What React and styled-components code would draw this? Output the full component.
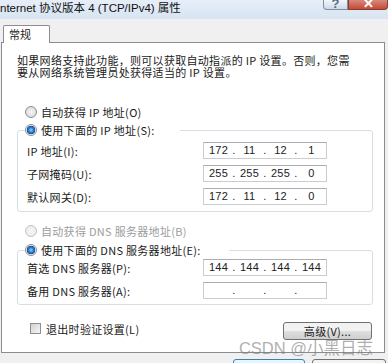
import React from 'react'
import styled, { createGlobalStyle } from 'styled-components'

const GlobalStyle = createGlobalStyle`
    html, body {
        margin: 0;
        padding: 0;
        background: #f0f0f0;
        overflow: hidden;
    }
`;

const cjk = `"Noto Sans CJK SC", "Noto Sans", sans-serif`;

const Window = styled.div`
    width: 388px;
    height: 363px;
    display: flex;
    flex-direction: column;
    background: #f0f0f0;
    overflow: hidden;
    font-family: ${cjk};
    color: #1a1a1a;
`;

const TitleBar = styled.div`
    height: 19px;
    flex-shrink: 0;
    display: flex;
    align-items: flex-start;
    background: linear-gradient(#e6eef8, #d8e4f2);
`;

const Title = styled.div`
    font-family: "Liberation Sans", "Noto Sans CJK SC", sans-serif;
    font-size: 11.5px;
    line-height: 17px;
    white-space: nowrap;
    color: #111;
`;

const CaptionButtons = styled.div`
    margin-left: auto;
    display: flex;
`;

const CaptionButton = styled.div`
    width: ${p => p.$w}px;
    height: 10px;
    box-sizing: border-box;
    display: flex;
    justify-content: center;
    align-items: flex-end;
    overflow: hidden;
    font-family: "Liberation Sans", sans-serif;
    font-weight: bold;
    font-size: 13px;
    line-height: 10px;
    border: 1px solid ${p => p.$close ? '#8c3a2e' : '#7f8ea3'};
    border-top: none;
    border-radius: ${p => p.$close ? '0 0 4px 0' : '0 0 0 4px'};
    background: ${p => p.$close
        ? 'linear-gradient(#d88a7c, #c54a36)'
        : 'linear-gradient(#f2f6fb, #cdd9e8)'};
    color: ${p => p.$close ? '#fff' : '#5a6a80'};
`;

const Body = styled.div`
    flex: 1;
    display: flex;
    flex-direction: column;
    padding: 6px 0 0 1px;
`;

const TabStrip = styled.div`
    display: flex;
    padding-left: 2px;
`;

const Tab = styled.div`
    position: relative;
    z-index: 1;
    width: 47px;
    height: 18px;
    box-sizing: border-box;
    margin-bottom: -1px;
    padding-left: 5px;
    border: 1px solid #898c95;
    border-bottom: none;
    border-radius: 2px 2px 0 0;
    background: #fff;
    font-size: 11px;
    line-height: 17px;
`;

const Panel = styled.div`
    position: relative;
    width: 384px;
    height: 311px;
    box-sizing: border-box;
    border: 1px solid #898c95;
    background: #fff;
    display: flex;
    flex-direction: column;
    font-size: 11px;
    letter-spacing: 0.3px;
`;

const Intro = styled.p`
    margin: 11px 0 0 15px;
    line-height: 12px;
    white-space: nowrap;
`;

const RadioRow = styled.label`
    display: flex;
    align-items: center;
    gap: 4px;
    height: 16px;
    margin: ${p => p.$m || '0'};
    padding-left: ${p => p.$indent || 0}px;
    color: ${p => p.$disabled ? '#9c9c9c' : '#1a1a1a'};
    white-space: nowrap;
    background: #fff;
`;

const Radio = styled.span`
    width: 12px;
    height: 12px;
    box-sizing: border-box;
    border-radius: 50%;
    border: 1px solid ${p => p.$disabled ? '#c4c4c4' : '#8b8e93'};
    background: ${p => p.$checked
        ? 'radial-gradient(circle, #8fd0ff 0, #2a7fd0 2.5px, #154f92 4px, #f4f4f4 4.6px, #dcdcdc 100%)'
        : p.$disabled
            ? 'radial-gradient(circle, #f6f6f6 0, #e8e8e8 100%)'
            : 'radial-gradient(circle, #f4f4f4 0, #d6d6d6 100%)'};
    flex-shrink: 0;
`;

const Group = styled.fieldset`
    margin: ${p => p.$m};
    padding: 0 0 ${p => p.$pb}px 9px;
    width: 356px;
    box-sizing: border-box;
    border: 1px solid #d5dfe5;
    border-radius: 3px;
    display: grid;
    grid-template-columns: 176px 124px;
    row-gap: 6px;
    align-items: center;
`;

const Legend = styled.legend`
    margin-left: -2px;
    padding: 0 ${p => p.$pr}px 0 0;
`;

const FieldLabel = styled.span`
    white-space: nowrap;
    &:first-of-type {
        margin-top: ${p => p.$mt || 0}px;
    }
`;

const IpBox = styled.div`
    height: 17px;
    box-sizing: border-box;
    margin-top: ${p => p.$mt || 0}px;
    border: 1px solid #c9cdd2;
    border-top-color: #abadb3;
    display: flex;
    padding-left: 3px;
    font-family: "Liberation Sans", sans-serif;
    font-size: 11px;
    letter-spacing: 0.2px;
    line-height: 15px;
    color: #222;
`;

const Octet = styled.span`
    width: 23px;
    text-align: center;
`;

const Dot = styled.span`
    width: 8px;
    text-align: center;
`;

const Footer = styled.div`
    display: flex;
    align-items: flex-start;
    margin-top: 17px;
    padding: 0 12px 0 28px;
`;

const CheckLabel = styled.label`
    display: flex;
    align-items: center;
    gap: 5px;
    height: 13px;
    white-space: nowrap;
`;

const CheckBox = styled.span`
    width: 11px;
    height: 11px;
    box-sizing: border-box;
    border: 1px solid #8e8f8f;
    background: linear-gradient(135deg, #d2d2d2, #f6f6f6);
`;

const Button = styled.div`
    width: ${p => p.$w}px;
    height: ${p => p.$h || 18}px;
    box-sizing: border-box;
    margin-left: ${p => p.$ml || 0};
    border: 1px solid ${p => p.$primary ? '#3c7fb1' : '#707070'};
    border-radius: 3px;
    background: ${p => p.$primary
        ? 'linear-gradient(#eaf6fd, #bee6fd)'
        : 'linear-gradient(#f2f2f2 45%, #dddddd 55%, #cfcfcf)'};
    text-align: center;
    font-size: 11px;
    line-height: ${p => p.$h ? p.$h - 2 : 16}px;
    white-space: nowrap;
`;

const DialogButtons = styled.div`
    display: flex;
    justify-content: flex-end;
    gap: 7px;
    margin-top: 6px;
    padding-right: 2px;
`;

const Watermark = styled.div`
    position: absolute;
    right: 11px;
    bottom: -5px;
    z-index: 2;
    font-family: "Liberation Sans", "Noto Sans CJK SC", sans-serif;
    font-size: 16.5px;
    line-height: 18px;
    letter-spacing: 0;
    color: rgba(120, 120, 120, 0.6);
    white-space: nowrap;
    pointer-events: none;
`;

const IpField = ({ parts, mt }) => (
    <IpBox $mt={mt}>
        {parts.map((p, i) => (
            <React.Fragment key={i}>
                <Octet>{p}</Octet>
                {i < 3 && <Dot>.</Dot>}
            </React.Fragment>
        ))}
    </IpBox>
)

const App = () => {
    return (
        <Window>
            <GlobalStyle />
            <TitleBar>
                <Title>nternet 协议版本 4 (TCP/IPv4) 属性</Title>
                <CaptionButtons>
                    <CaptionButton $w={25}>?</CaptionButton>
                    <CaptionButton $w={40} $close>✕</CaptionButton>
                </CaptionButtons>
            </TitleBar>
            <Body>
                <TabStrip>
                    <Tab>常规</Tab>
                </TabStrip>
                <Panel>
                    <Intro>
                        如果网络支持此功能，则可以获取自动指派的 IP 设置。否则，您需<br />
                        要从网络系统管理员处获得适当的 IP 设置。
                    </Intro>
                    <RadioRow $m="26px 0 2px 0" $indent={23}>
                        <Radio />自动获得 IP 地址(O)
                    </RadioRow>
                    <Group $m="0 0 0 15px" $pb={6}>
                        <Legend $pr={25}>
                            <RadioRow><Radio $checked />使用下面的 IP 地址(S):</RadioRow>
                        </Legend>
                        <FieldLabel $mt={4}>IP 地址(I):</FieldLabel>
                        <IpField parts={['172', '11', '12', '1']} mt={4} />
                        <FieldLabel>子网掩码(U):</FieldLabel>
                        <IpField parts={['255', '255', '255', '0']} />
                        <FieldLabel>默认网关(D):</FieldLabel>
                        <IpField parts={['172', '11', '12', '0']} />
                    </Group>
                    <RadioRow $m="11px 0 3px 0" $indent={23} $disabled>
                        <Radio $disabled />自动获得 DNS 服务器地址(B)
                    </RadioRow>
                    <Group $m="0 0 0 15px" $pb={5}>
                        <Legend $pr={28}>
                            <RadioRow><Radio $checked />使用下面的 DNS 服务器地址(E):</RadioRow>
                        </Legend>
                        <FieldLabel $mt={1}>首选 DNS 服务器(P):</FieldLabel>
                        <IpField parts={['144', '144', '144', '144']} mt={1} />
                        <FieldLabel>备用 DNS 服务器(A):</FieldLabel>
                        <IpField parts={['', '', '', '']} />
                    </Group>
                    <Footer>
                        <CheckLabel>
                            <CheckBox />退出时验证设置(L)
                        </CheckLabel>
                        <Button $w={89} $ml="auto">高级(V)...</Button>
                    </Footer>
                    <Watermark>CSDN @小黑日志</Watermark>
                </Panel>
                <DialogButtons>
                    <Button $w={72} $h={23} $primary>确定</Button>
                    <Button $w={74} $h={23}>取消</Button>
                </DialogButtons>
            </Body>
        </Window>
    )
}

export default App
